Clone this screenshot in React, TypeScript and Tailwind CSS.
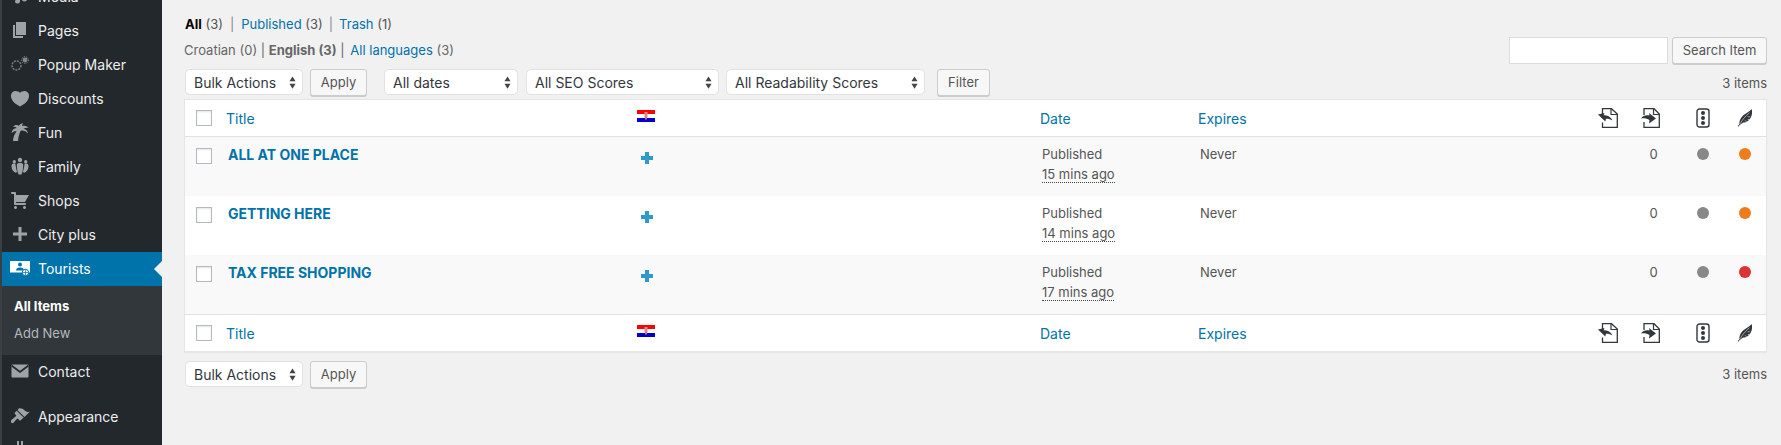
import React from "react";

const font = { fontFamily: "Inter, 'Liberation Sans', sans-serif" };

function Icon({ children, className = "" }: { children: React.ReactNode; className?: string }) {
  return (
    <svg viewBox="0 0 20 20" className={`w-[20px] h-[20px] ${className}`} fill="currentColor">
      {children}
    </svg>
  );
}

const menuIcons: Record<string, React.ReactNode> = {
  Media: <path d="M8 2l9-1v12.500a2.500 2 0 1 1-2-2V5l-5 .6v10a2.500 2 0 1 1-2-2z" />,
  Pages: <path d="M6 15V2h10v13H6zm-1 1h8v2H3V5h2v11z" />,
  "Popup Maker": (
    <g>
      <circle cx="6.500" cy="11.500" r="4.500" fill="none" stroke="currentColor" strokeWidth="1.600" strokeDasharray="2 1" opacity="0.65" />
      <circle cx="15" cy="6" r="2.400" opacity="0.8" />
      <circle cx="15" cy="6" r="3.400" fill="none" stroke="currentColor" strokeWidth="1" strokeDasharray="1.200 1.200" opacity="0.8" />
    </g>
  ),
  Discounts: (
    <path d="M10 18.400c3.500-1.600 6.600-4 8-6.700 1.300-2.600 1.400-5.300.2-6.800-1.100-1.400-2.600-1.900-4-1.900-1.600.1-3.100.8-4.200 1.800-1.100-1-2.600-1.700-4.200-1.800-1.400 0-2.900.5-4 1.900-1.200 1.500-1.100 4.200.2 6.800 1.400 2.700 4.500 5.100 8 6.700z" />
  ),
  Fun: (
    <path d="M3 19c.2-3.800 1.400-7 3.600-9.600C5 8.800 3.200 9.300 1.500 11.200c.2-3 2.300-5 5.300-5.200C5.800 5 4.300 4.600 3 5c1.400-2 3.600-2.500 6-1.300C9.800 2.400 11.200 1.400 13 1c-.5 1-.9 2-.9 3 2.200-.8 4.800-.2 6.400 1.900-2-.3-3.700 0-5 .8 2.300.4 4.200 2.200 4.500 4.900-1.700-1.900-3.800-2.900-6-3-.4 0-1 .1-1.500.3-1.500 3.200-2.300 6.600-2.400 10.100H3z" />
  ),
  Family: (
    <g>
      <circle cx="10" cy="4" r="2.200" />
      <circle cx="4.300" cy="5.800" r="1.700" />
      <circle cx="15.700" cy="5.800" r="1.700" />
      <path d="M6.800 9c0-1.300 1-2 2-2h2.400c1 0 2 .7 2 2 0 4-.7 7-1.700 9.500H8.500C7.500 16 6.800 13 6.800 9z" />
      <path d="M1.500 10c0-1.400.8-2.400 2-2.400h1.900c.4 3 .8 6 1.800 8.400l-1.500.8c-2.500-1-4.200-3.300-4.200-6.800z" />
      <path d="M18.500 10c0-1.400-.8-2.400-2-2.400h-1.900c-.4 3-.8 6-1.800 8.400l1.500.8c2.500-1 4.200-3.300 4.200-6.800z" />
    </g>
  ),
  Shops: (
    <path d="M6 13h9c.55 0 1 .45 1 1s-.45 1-1 1H5c-.55 0-1-.45-1-1V4H2c-.55 0-1-.45-1-1s.45-1 1-1h3c.55 0 1 .45 1 1v2h13l-4 7H6v1zm-.5 3c.83 0 1.500.67 1.500 1.500S6.330 19 5.500 19 4 18.330 4 17.500 4.670 16 5.500 16zm9 0c.83 0 1.500.67 1.500 1.500s-.67 1.500-1.500 1.500-1.500-.67-1.500-1.500.67-1.500 1.500-1.500z" />
  ),
  "City plus": <path d="M8.500 3h3v5.500H17v3h-5.500V17h-3v-5.500H3v-3h5.500z" />,
  Tourists: (
    <g>
      <rect x="0" y="3" width="20" height="11.500" fill="#fff" />
      <circle cx="10" cy="6.500" r="2" fill="#0073aa" />
      <path d="M6 12.500c0-2 1.600-3 4-3s4 1 4 3z" fill="#0073aa" />
      <circle cx="15.500" cy="14.500" r="3.200" fill="#fff" stroke="#0073aa" strokeWidth="1" />
      <path d="M15.500 11.500v6M12.500 14.500h6" stroke="#0073aa" strokeWidth="0.700" />
    </g>
  ),
  Contact: (
    <g>
      <path d="M1.500 4.500c0-.6.4-1 1-1h15c.6 0 1 .4 1 1v11c0 .6-.4 1-1 1h-15c-.6 0-1-.4-1-1z" />
      <path d="M1.500 4.500L10 11l8.500-6.500" fill="none" stroke="#23282d" strokeWidth="1.700" />
    </g>
  ),
  Appearance: (
    <path d="M14.480 11.060L7.410 3.990l1.500-1.500c.5-.56 2.300-.47 3.510.32 1.210.8 1.430 1.280 2.910 2.100 1.180.64 2.450 1.260 4.450.85zm-.71.71L6.700 4.700 4.930 6.470c-.39.39-.39 1.020 0 1.410l1.060 1.060c.39.39.39 1.030 0 1.420-.6.6-1.430 1.110-2.210 1.690-.35.26-.7.53-1.010.84C1.430 13.230.91 14.600.97 15.590c.05.96.62 1.610 1.360 1.620.78.01 1.540-.56 2.060-1.340.26-.39.53-.73.8-1.040.6-.7 1.140-1.200 1.650-1.710.39-.39 1.030-.39 1.410 0l1.060 1.060c.39.39 1.030.39 1.420 0l1.770-1.770z" />
  ),
  Plugins: <path d="M7 1h2v5h2V1h2v5h2v4c0 2-1.500 3.500-4 4v5H9v-5c-2.500-.5-4-2-4-4V6h2z" />,
};

function MenuItem({ label, active = false, hideLabel = false }: { label: string; active?: boolean; hideLabel?: boolean }) {
  return (
    <div
      className={`relative flex items-center h-[34px] pl-[8px] pb-[2px] text-[14px] ${
        active ? "bg-[#0073aa] text-white" : "text-[#eeeeee]"
      }`}
    >
      <span className={`w-[28px] shrink-0 ${active ? "text-white" : "text-[#9ea3a8]"}`}>
        <Icon>{menuIcons[label]}</Icon>
      </span>
      {!hideLabel && <span>{label}</span>}
      {active && (
        <span className="absolute right-0 top-[9px] w-0 h-0 border-y-[8px] border-y-transparent border-r-[8px] border-r-[#f1f1f1]" />
      )}
    </div>
  );
}

function Sidebar() {
  return (
    <aside className="w-[162px] shrink-0 h-[445px] overflow-hidden bg-[#23282d] border-l-2 border-l-[#3b3f43]">
      <div className="-mt-[20px]">
        {["Media", "Pages", "Popup Maker", "Discounts", "Fun", "Family", "Shops", "City plus"].map((l) => (
          <MenuItem key={l} label={l} />
        ))}
        <MenuItem label="Tourists" active />
        <div className="h-[69px] bg-[#32373c] pt-[7px] pl-[12px] text-[13px] leading-[27px] text-[#b4b9be]">
          <div className="font-bold text-white">All Items</div>
          <div>Add New</div>
        </div>
        <MenuItem label="Contact" />
        <div className="h-[11px]" />
        <MenuItem label="Appearance" />
        <MenuItem label="Plugins" hideLabel />
      </div>
    </aside>
  );
}

function Select({ label, w }: { label: string; w: string }) {
  return (
    <div className={`relative h-[26px] ${w}`}>
      <select className="appearance-none w-full h-full bg-white border border-[#e2e2e2] rounded-[5px] pl-[8px] text-[14px] text-[#32373c] outline-none">
        <option>{label}</option>
      </select>
      <svg viewBox="0 0 8 14" className="absolute right-[7px] top-[7px] w-[7px] h-[13px] text-[#444]" fill="currentColor">
        <path d="M4 0l3.500 5.500h-7zM4 14L.5 8.500h7z" />
      </svg>
    </div>
  );
}

function Button({ children, w }: { children: React.ReactNode; w: string }) {
  return (
    <button className={`h-[27px] ${w} bg-[#f7f7f7] border border-[#cccccc] rounded-[3px] shadow-[0_1px_0_#cccccc] text-[13px] text-[#555555] flex items-center justify-center`}>
      {children}
    </button>
  );
}

function Checkbox() {
  return <span className="block w-[16px] h-[16px] bg-white border border-[#b4b9be] shadow-[inset_0_1px_2px_rgba(0,0,0,0.1)]" />;
}

function Flag() {
  return (
    <svg viewBox="0 0 18 12" className="w-[18px] h-[12px] block">
      <rect width="18" height="4" fill="#ff0000" />
      <rect y="4" width="18" height="4" fill="#ffffff" />
      <rect y="8" width="18" height="4" fill="#0000cc" />
      <rect x="7.500" y="2" width="3" height="5.500" fill="#d88" />
      <rect x="8" y="7" width="2" height="2.500" fill="#e66" />
    </svg>
  );
}

function Plus() {
  return (
    <svg viewBox="0 0 12 12" className="w-[12px] h-[12px] block" fill="#2e9acb">
      <path d="M4 0h4v4h4v4H8v4H4V8H0V4h4z" />
    </svg>
  );
}

function DocIcon({ dir }: { dir: "in" | "out" }) {
  if (dir === "in") {
    return (
      <svg viewBox="0 0 20 20" className="w-[20px] h-[20px] block text-[#32373c]">
        <path d="M4.500 7V.7H13.500L19.300 6V19.300H4.500V14.500" fill="none" stroke="currentColor" strokeWidth="1.300" />
        <path d="M13 1v5.500h6" fill="none" stroke="currentColor" strokeWidth="1.200" />
        <path d="M0 6.500l6.500-1.500-.8 2.300c3 .1 7 1 8.800 5.200-2.300-1.600-5-2-6.500-1.700l-.7 2.700L0 6.500z" fill="currentColor" />
      </svg>
    );
  }
  return (
    <svg viewBox="0 0 20 20" className="w-[20px] h-[20px] block text-[#32373c]">
      <path d="M3 7V.7H13L18.300 6V19.300H3V14" fill="none" stroke="currentColor" strokeWidth="1.300" />
      <path d="M12.500 1v5.500h6" fill="none" stroke="currentColor" strokeWidth="1.200" />
      <path d="M0 10.500C2 7.500 5 6.800 8.500 7.500L8 5l7 5.500-7 5 .5-3.500C6 10.500 3 9.800 0 10.500z" fill="currentColor" />
    </svg>
  );
}

function TrafficIcon() {
  return (
    <svg viewBox="0 0 14 20" className="w-[14px] h-[20px] block text-[#32373c]">
      <rect x="1" y="1" width="12" height="18" rx="2.500" fill="none" stroke="currentColor" strokeWidth="1.400" />
      <circle cx="7" cy="5" r="2" fill="currentColor" />
      <circle cx="7" cy="10" r="2" fill="currentColor" />
      <circle cx="7" cy="15" r="2" fill="currentColor" />
    </svg>
  );
}

function FeatherIcon() {
  return (
    <svg viewBox="0 0 18 20" className="w-[16px] h-[20px] block text-[#32373c]">
      <path
        d="M16.500 0c.8 3 .6 6.500-1 9.500-.5.9-1 1.600-1.600 2.300l-2.200-.3 1.500 1.300c-1.700 1.400-3.800 2.200-6.200 2.400L3 18l-1.500 1.800-.7-.5 2-2.500c-.4-2.800.5-5.500 2.500-8C7.500 6 11 4.500 13 3c1.200-.8 2.500-2 3.500-3z"
        fill="currentColor"
      />
      <path d="M3.500 16.500C6 12 9 8.500 14 4" fill="none" stroke="#ffffff" strokeWidth="0.600" />
      <path d="M14.500 8.500l-2.500.2M11 14l-2.200-1.200" fill="none" stroke="#ffffff" strokeWidth="0.600" />
    </svg>
  );
}

const gridCols = "grid grid-cols-[41px_411px_403px_158px_1fr_44px_42px_62px_32px]";

function HeadRow({ border }: { border: string }) {
  const link = "text-[14px] text-[#0073aa]";
  return (
    <div className={`${gridCols} items-center h-[36px] bg-white ${border}`}>
      <div className="pl-[11px]">
        <Checkbox />
      </div>
      <div className={link}>Title</div>
      <div className="pb-[4px]">
        <Flag />
      </div>
      <div className={link}>Date</div>
      <div className={link}>Expires</div>
      <div className="flex justify-center">
        <DocIcon dir="in" />
      </div>
      <div className="flex justify-center">
        <DocIcon dir="out" />
      </div>
      <div className="flex justify-center">
        <TrafficIcon />
      </div>
      <div className="flex justify-center pr-[10px]">
        <FeatherIcon />
      </div>
    </div>
  );
}

const rows = [
  { title: "ALL AT ONE PLACE", ago: "15 mins ago", dot: "bg-[#ee7c1b]", alt: true },
  { title: "GETTING HERE", ago: "14 mins ago", dot: "bg-[#ee7c1b]", alt: false },
  { title: "TAX FREE SHOPPING", ago: "17 mins ago", dot: "bg-[#dc3232]", alt: true },
];

function Row({ title, ago, dot, alt }: (typeof rows)[number]) {
  return (
    <div className={`${gridCols} h-[59px] text-[13px] text-[#555555] ${alt ? "bg-[#f9f9f9]" : "bg-white"}`}>
      <div className="pl-[11px] pt-[11px]">
        <Checkbox />
      </div>
      <div className="pl-[2px] pt-[8px] text-[14px] font-bold text-[#0073aa] leading-[20px]">{title}</div>
      <div className="pl-[4px] pt-[15px]">
        <Plus />
      </div>
      <div className="pl-[2px] pt-[7px] leading-[20px]">
        <div>Published</div>
        <div className="w-fit border-b border-dotted border-[#444] leading-[15px] mt-[3px]">{ago}</div>
      </div>
      <div className="pl-[2px] pt-[7px] leading-[20px]">Never</div>
      <div />
      <div className="text-center pl-[5px] pt-[7px] leading-[20px]">0</div>
      <div className="flex justify-center pt-[11px]">
        <span className="block w-[12px] h-[12px] rounded-full bg-[#888888]" />
      </div>
      <div className="flex justify-center pt-[11px] pr-[10px]">
        <span className={`block w-[12px] h-[12px] rounded-full ${dot}`} />
      </div>
    </div>
  );
}

function Main() {
  return (
    <main className="flex-1 min-w-0 pl-[22px] pr-[14px] text-[13px] text-[#555555]">
      <div className="flex justify-between">
        <div>
          <div className="pt-[14px] h-[34px] leading-[20px] pl-[1px] whitespace-pre">
            <span className="font-bold text-black">All</span> (3)
            <span className="mx-[7px] text-[#888888]">|</span>
            <span className="text-[#0073aa]">Published</span> (3)
            <span className="mx-[6px] text-[#888888]">|</span>
            <span className="text-[#0073aa]">Trash</span> (1)
          </div>
          <div className="mt-[6px] h-[20px] leading-[20px] text-[#666666] whitespace-pre">
            Croatian (0) | <span className="font-bold">English (3)</span> | <span className="ml-[2px] text-[#0073aa]">All languages</span> (3)
          </div>
          <div className="mt-[9px] flex items-start pl-[1px]">
            <Select label="Bulk Actions" w="w-[118px]" />
            <div className="ml-[7px]">
              <Button w="w-[57px]">Apply</Button>
            </div>
            <div className="ml-[17px]">
              <Select label="All dates" w="w-[134px]" />
            </div>
            <div className="ml-[8px]">
              <Select label="All SEO Scores" w="w-[193px]" />
            </div>
            <div className="ml-[7px]">
              <Select label="All Readability Scores" w="w-[199px]" />
            </div>
            <div className="ml-[12px]">
              <Button w="w-[53px]">Filter</Button>
            </div>
          </div>
        </div>
        <div className="pt-[37px] flex flex-col items-end">
          <div className="flex items-start">
            <span className="block w-[159px] h-[27px] bg-white border border-[#dddddd]" />
            <div className="ml-[4px]">
              <Button w="w-[95px]">Search Item</Button>
            </div>
          </div>
          <div className="mt-[9px] leading-[20px]">3 items</div>
        </div>
      </div>

      <div className="mt-[3px] border border-[#e5e5e5] shadow-[0_1px_1px_rgba(0,0,0,0.04)]">
        <HeadRow border="border-b border-[#e1e1e1] box-content" />
        {rows.map((r) => (
          <Row key={r.title} {...r} />
        ))}
        <HeadRow border="border-t border-[#e1e1e1] box-content" />
      </div>

      <div className="mt-[9px] flex items-start justify-between pl-[1px]">
        <div className="flex items-start">
          <Select label="Bulk Actions" w="w-[118px]" />
          <div className="ml-[7px]">
            <Button w="w-[57px]">Apply</Button>
          </div>
        </div>
        <div className="leading-[27px]">3 items</div>
      </div>
    </main>
  );
}

export default function App() {
  return (
    <div className="flex w-full h-[445px] overflow-hidden bg-[#f1f1f1]" style={font}>
      <Sidebar />
      <Main />
    </div>
  );
}
